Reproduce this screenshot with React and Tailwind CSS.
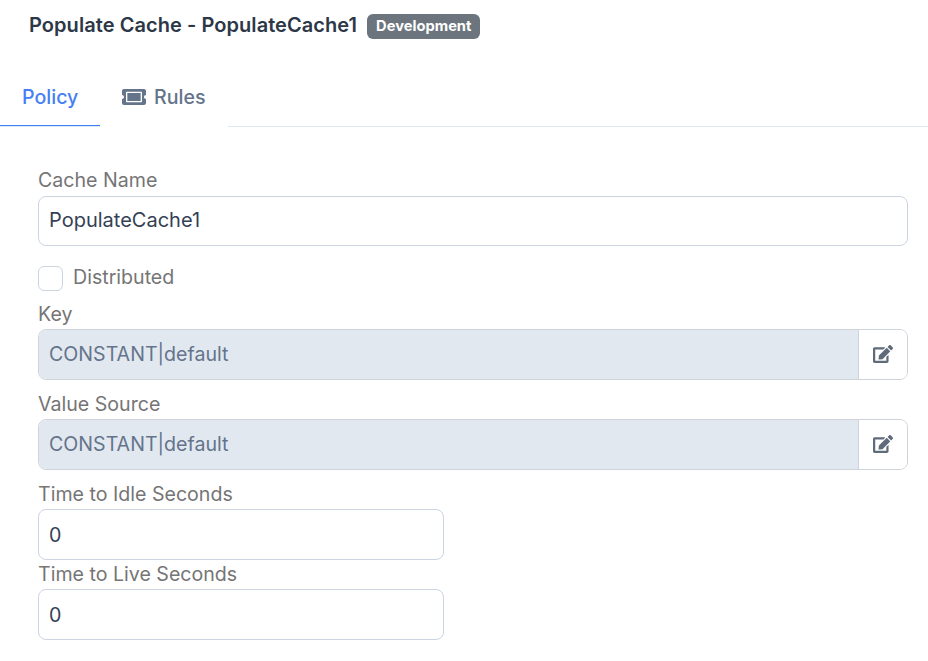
import { FaTicketAlt, FaEdit } from "react-icons/fa";

function Label({ children }) {
  return <label className="block h-[30px] leading-[30px] text-[19.6px] text-[#757575]">{children}</label>;
}

function LockedField({ label, value, className }) {
  return (
    <div className={className}>
      <Label>{label}</Label>
      <div className="flex h-[51px] w-[870px] rounded-lg border border-[#ced4da] overflow-hidden">
        <div className="flex-1 flex items-center bg-[#e2e8f0] px-[10px] text-[19.6px] text-[#64748b]">{value}</div>
        <div className="w-[49px] flex items-center justify-center bg-white border-l border-[#cbd5e1]">
          <FaEdit className="text-[20px] text-[#5f6b7a] -mt-px" />
        </div>
      </div>
    </div>
  );
}

function NumberField({ label, value, className }) {
  return (
    <div className={className}>
      <Label>{label}</Label>
      <input
        readOnly
        value={value}
        className="block h-[51px] w-[406px] rounded-lg border border-[#cbd5e1] px-[10px] text-[19.6px] text-[#334155] outline-none"
      />
    </div>
  );
}

export default function App() {
  return (
    <div className="min-h-screen bg-white font-['Inter',sans-serif]">
      <div className="flex items-center pl-[29px] pt-[14px] h-[39px]">
        <h1 className="text-[20px] leading-[25px] -mt-[3px] font-semibold tracking-[0.06px] text-[#2d3748]">Populate Cache - PopulateCache1</h1>
        <span className="ml-[10px] h-[25px] px-[9px] flex items-center rounded-md bg-[#6c757d] text-[14.7px] font-bold text-white">Development</span>
      </div>

      <div className="flex h-[60px] mt-[28px] border-b border-[#e2e8f0]">
        <div className="w-[100px] flex items-center pl-[22px] pt-[3px] border-b border-[#3b82f6] text-[19.6px] font-medium text-[#4680f5]">Policy</div>
        <div className="w-[128px] -mb-px flex items-center pl-[22px] pt-[3px] gap-2 bg-white border-b border-white text-[19.6px] font-medium text-[#64748b]">
          <FaTicketAlt className="text-[24px] -mt-[3px]" />
          Rules
        </div>
      </div>

      <div className="pl-[38px] pt-[38px]">
        <Label>Cache Name</Label>
        <input
          readOnly
          value="PopulateCache1"
          className="block h-[50px] w-[870px] mt-[1px] rounded-lg border border-[#cbd5e1] px-[10px] pb-[2px] text-[20px] text-[#334155] outline-none"
        />
        <div className="flex items-center gap-[10px] mt-[20px] h-[25px]">
          <span className="w-[25px] h-[25px] rounded-md border border-[#cbd5e1] bg-white" />
          <span className="text-[19.6px] text-[#757575] -mt-px">Distributed</span>
        </div>
        <LockedField label="Key" value="CONSTANT|default" className="mt-[8px]" />
        <LockedField label="Value Source" value="CONSTANT|default" className="mt-[9px]" />
        <NumberField label="Time to Idle Seconds" value="0" className="mt-[9px]" />
        <NumberField label="Time to Live Seconds" value="0" className="-mt-px" />
      </div>
    </div>
  );
}
